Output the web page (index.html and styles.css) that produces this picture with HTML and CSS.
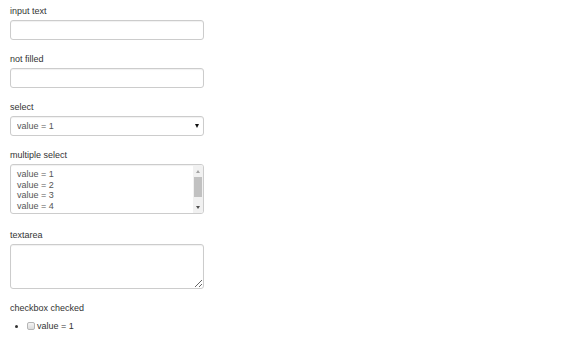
FILE: index.html
```html
<!DOCTYPE html>
<html>
<head>
<meta charset="utf-8">
<link rel="stylesheet" href="styles.css">
</head>
<body>
<form class="form">
  <div class="field">
    <label class="label">input text</label>
    <input class="control" type="text">
  </div>
  <div class="field">
    <label class="label">not filled</label>
    <input class="control" type="text">
  </div>
  <div class="field">
    <label class="label">select</label>
    <div class="select-wrap">
      <select class="control select"><option>value = 1</option><option>value = 2</option></select>
      <span class="select-arrow"></span>
    </div>
  </div>
  <div class="field">
    <label class="label">multiple select</label>
    <div class="control multi" role="listbox">
      <div class="multi-options">
        <div class="opt">value = 1</div>
        <div class="opt">value = 2</div>
        <div class="opt">value = 3</div>
        <div class="opt">value = 4</div>
      </div>
      <div class="scrollbar">
        <div class="sb-btn"><span class="tri-up"></span></div>
        <div class="sb-track"><div class="sb-thumb"></div></div>
        <div class="sb-btn"><span class="tri-down"></span></div>
      </div>
    </div>
  </div>
  <div class="field field-textarea">
    <label class="label">textarea</label>
    <textarea class="control textarea"></textarea>
  </div>
  <div class="field">
    <label class="label">checkbox checked</label>
    <ul class="checks">
      <li class="check-item"><label class="check-label"><input type="checkbox" class="check">value = 1</label></li>
    </ul>
  </div>
</form>
</body>
</html>
```

FILE: styles.css
```css
html, body {
  margin: 0;
  padding: 0;
  background: #fff;
}
body {
  font-family: "Liberation Sans", Arial, sans-serif;
  font-size: 9px;
  color: #333;
}
.form {
  padding: 6px 0 0 10px;
  display: flex;
  flex-direction: column;
}
.field {
  display: flex;
  flex-direction: column;
  margin-bottom: 14px;
}
.field-textarea {
  margin-top: 2px;
}
.label {
  display: block;
  line-height: 10px;
  margin-bottom: 4px;
  color: #333;
}
.control {
  box-sizing: border-box;
  width: 194px;
  height: 20px;
  margin: 0;
  border: 1px solid #ccc;
  border-radius: 3px;
  background: #fff;
  box-shadow: inset 0 1px 1px rgba(0,0,0,0.06);
  font-family: "Liberation Sans", Arial, sans-serif;
  font-size: 9px;
  color: #555;
  padding: 0 6px;
  outline: none;
}
.select-wrap {
  position: relative;
  width: 194px;
}
.select {
  appearance: none;
  -webkit-appearance: none;
  display: block;
}
.select-arrow {
  position: absolute;
  right: 5px;
  top: 8px;
  width: 0;
  height: 0;
  border-left: 2.5px solid transparent;
  border-right: 2.5px solid transparent;
  border-top: 4px solid #111;
}
.multi {
  height: 50px;
  padding: 0;
  display: flex;
  overflow: hidden;
}
.multi-options {
  flex: 1;
  padding: 4px 0 0 6px;
  overflow: hidden;
}
.opt {
  line-height: 10.5px;
  color: #555;
}
.scrollbar {
  width: 10px;
  display: flex;
  flex-direction: column;
  background: #f1f1f1;
}
.sb-btn {
  height: 12px;
  display: flex;
  align-items: center;
  justify-content: center;
}
.sb-track {
  flex: 1;
  display: flex;
  flex-direction: column;
  padding: 0 1px;
}
.sb-thumb {
  height: 20px;
  background: #c1c1c1;
}
.tri-up {
  width: 0;
  height: 0;
  border-left: 2.5px solid transparent;
  border-right: 2.5px solid transparent;
  border-bottom: 3px solid #a3a3a3;
}
.tri-down {
  width: 0;
  height: 0;
  border-left: 2.5px solid transparent;
  border-right: 2.5px solid transparent;
  border-top: 3px solid #505050;
}
.textarea {
  height: 45px;
  padding: 3px 6px;
  resize: both;
}
.checks {
  margin: 4px 0 0 0;
  padding: 0 0 0 17px;
  list-style: disc;
}
.check-item {
  line-height: 10px;
  color: #333;
}
.check-label {
  display: inline;
}
.check {
  appearance: none;
  -webkit-appearance: none;
  box-sizing: border-box;
  display: inline-block;
  vertical-align: -1px;
  width: 8px;
  height: 8px;
  margin: 0 2px 0 0;
  border: 1px solid #b5b5b5;
  border-radius: 2px;
  background: linear-gradient(#f4f4f4, #dcdcdc);
}
```
